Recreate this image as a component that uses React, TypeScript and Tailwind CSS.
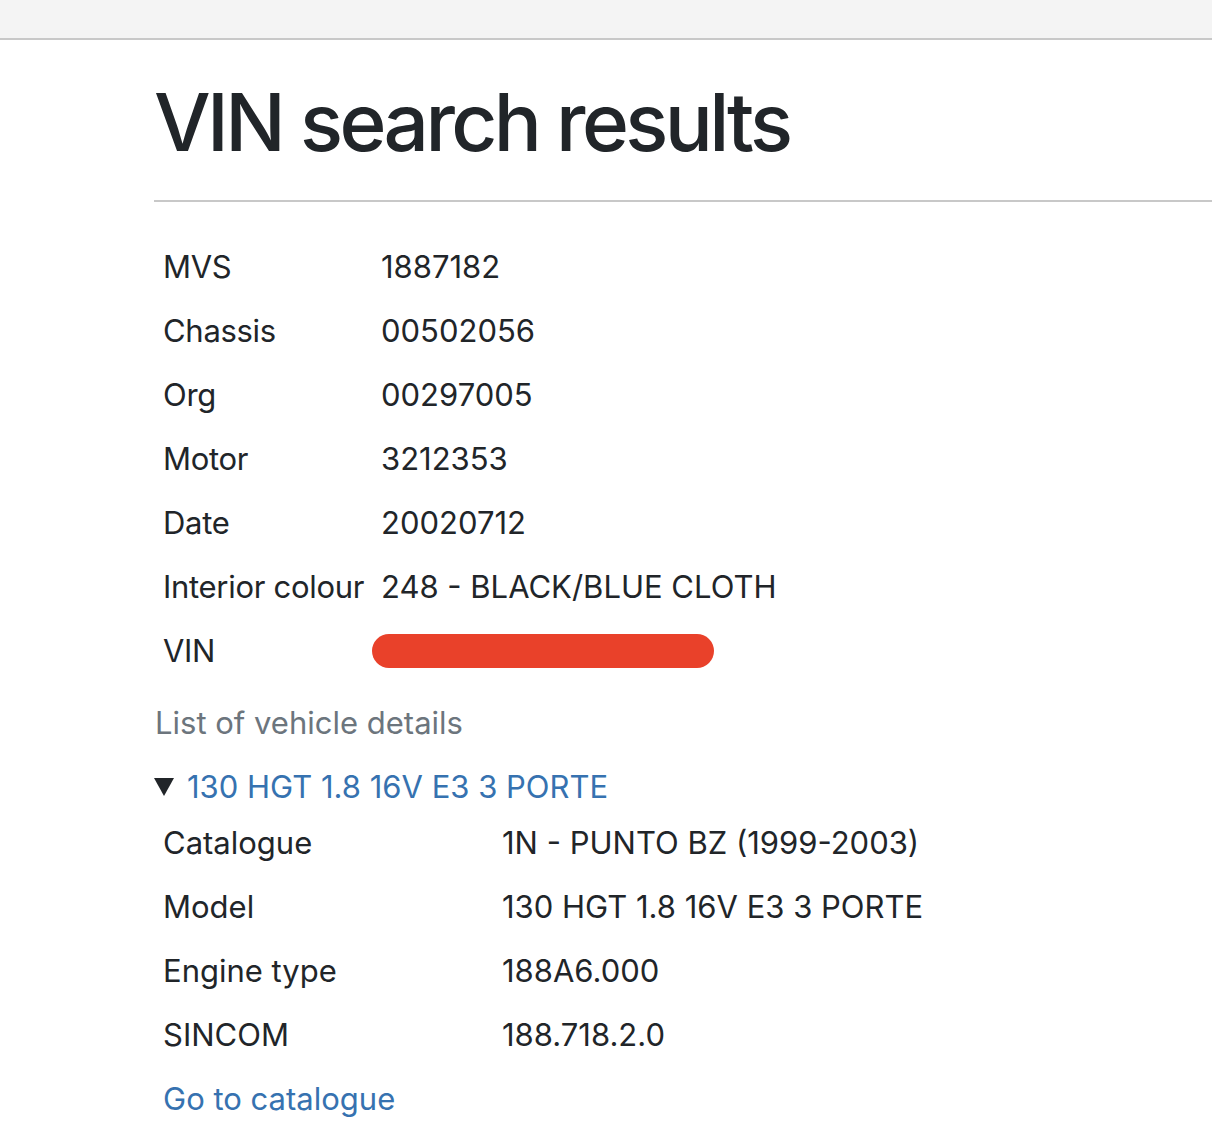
import React from "react";

const vehicle = [
  { label: "MVS", value: "1887182" },
  { label: "Chassis", value: "00502056" },
  { label: "Org", value: "00297005" },
  { label: "Motor", value: "3212353" },
  { label: "Date", value: "20020712" },
  { label: "Interior colour", value: "248 - BLACK/BLUE CLOTH" },
  { label: "VIN", value: null },
];

const details = [
  { label: "Catalogue", value: "1N - PUNTO BZ (1999-2003)" },
  { label: "Model", value: "130 HGT 1.8 16V E3 3 PORTE" },
  { label: "Engine type", value: "188A6.000" },
  { label: "SINCOM", value: "188.718.2.0" },
];

const App = () => {
  return (
    <div
      className="min-h-[1144px] bg-white text-[#212529]"
      style={{ fontFamily: "Inter, 'Noto Sans', sans-serif" }}
    >
      <div className="h-[40px] border-b-2 border-[#c8c8c8] bg-[#f4f4f4]" />
      <div className="pl-[154px]">
        <h1 className="mt-[34px] text-[80px] leading-[96px] font-medium tracking-[-3.6px]">
          VIN search results
        </h1>
        <div className="mt-[30px] h-[2px] bg-[#c8c8c8]" />
        <div className="mt-[33px] grid grid-cols-[218px_auto] text-[31px]">
          {vehicle.map((row, index) => (
            <React.Fragment key={index}>
              <div className="flex h-16 items-center pl-[9px] tracking-[-0.3px]">{row.label}</div>
              <div className="flex h-16 items-center pl-[9px]">
                {row.value ?? (
                  <span className="-ml-[9px] h-[34px] w-[342px] rounded-full bg-[#e9412a]" />
                )}
              </div>
            </React.Fragment>
          ))}
        </div>
        <div className="mt-2 flex h-16 items-center pl-[1px] text-[31px] text-[#6c757d]">
          List of vehicle details
        </div>
        <div className="flex h-16 items-center gap-[13px] text-[31px] text-[#3672b0]">
          <svg width="20" height="18" viewBox="0 0 20 18" className="shrink-0">
            <polygon points="0,0 20,0 10,18" fill="#212529" />
          </svg>
          <span>130 HGT 1.8 16V E3 3 PORTE</span>
        </div>
        <div className="-mt-2 grid grid-cols-[339px_auto] text-[31px]">
          {details.map((row, index) => (
            <React.Fragment key={index}>
              <div className="flex h-16 items-center pl-[9px]">{row.label}</div>
              <div className="flex h-16 items-center pl-[9px]">{row.value}</div>
            </React.Fragment>
          ))}
        </div>
        <div className="flex h-16 items-center pl-[9px] text-[31px] text-[#3672b0]">
          Go to catalogue
        </div>
      </div>
    </div>
  );
};

export default App;
